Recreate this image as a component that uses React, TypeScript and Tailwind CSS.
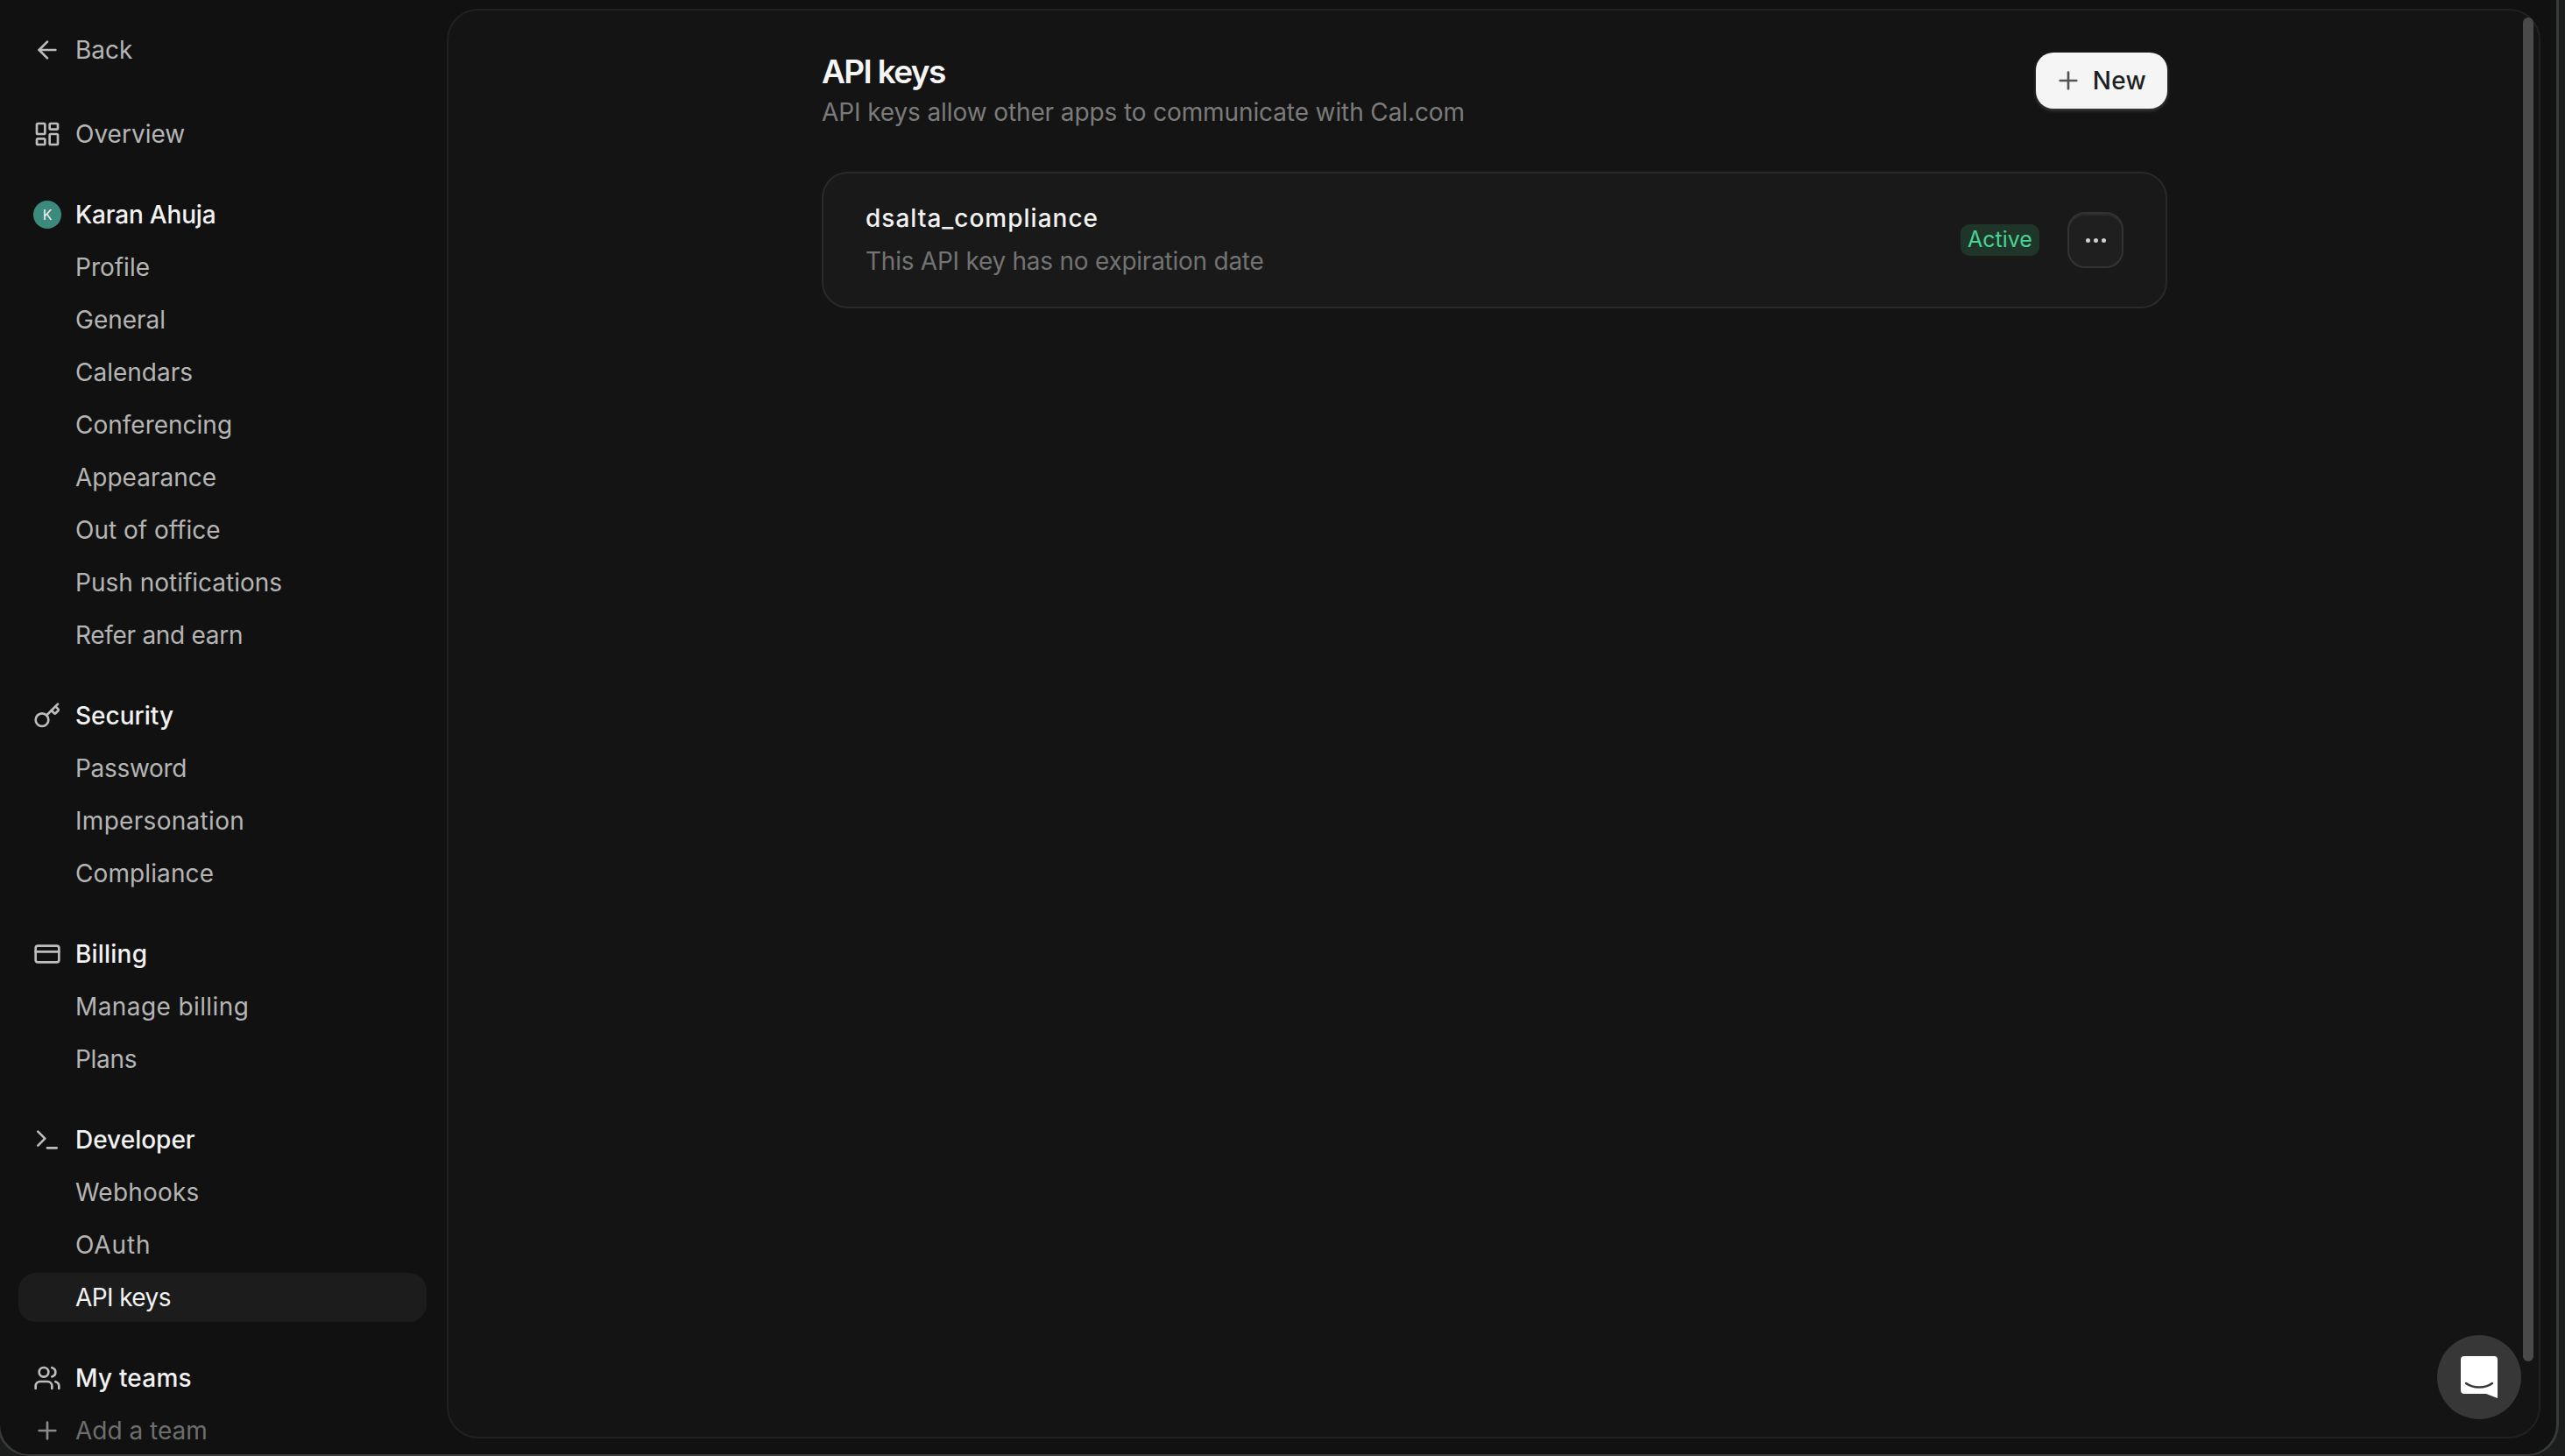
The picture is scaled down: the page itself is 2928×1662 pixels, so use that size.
import React from "react";
import { ArrowLeft, LayoutDashboard, Key, CreditCard, Terminal, Users, Plus } from "lucide-react";

const font = { fontFamily: "Inter, 'Liberation Sans', sans-serif" };

function Row({ icon, label, tone = "sub", active = false, track = "" }: { icon?: React.ReactNode; label: string; tone?: "top" | "head" | "sub" | "dim"; active?: boolean; track?: string }) {
  const color = active
    ? "text-[#f2f2f2]"
    : tone === "head"
      ? "text-[#f2f2f2]"
      : tone === "dim"
        ? "text-[#6e6e6e]"
        : "text-[#b5b5b5]";
  return (
    <div className={`flex h-[56px] w-[466px] shrink-0 items-center gap-[16px] rounded-[20px] pl-[17px] text-[28px] ${color} ${active ? "bg-[#1c1c1c]" : ""}`}>
      <span className="flex h-[32px] w-[32px] shrink-0 items-center justify-center">{icon}</span>
      <span className={`whitespace-nowrap ${track} ${tone === "head" ? "font-medium" : "font-normal"}`}>{label}</span>
    </div>
  );
}

const iconCls = "h-[32px] w-[32px] text-[#bdbdbd]";

function Section({ children }: { children: React.ReactNode }) {
  return <div className="flex flex-col gap-[4px]">{children}</div>;
}

export default function App() {
  return (
    <div className="h-[1662px] w-[2928px] overflow-hidden bg-[#1c1e1e]" style={font}>
      <div className="-ml-[3px] flex h-[1662px] w-[2924px] rounded-b-[36px] border-x-[3px] border-b-[2px] border-[#3a3a3a] bg-[#111111]">
        <aside className="flex w-[510px] shrink-0 flex-col overflow-hidden pt-[29px] pl-[21px]">
          <Row tone="sub" label="Back" icon={<ArrowLeft className={iconCls} strokeWidth={2} />} />
          <div className="mt-[40px]">
            <Row tone="sub" label="Overview" icon={<LayoutDashboard className={iconCls} strokeWidth={2} />} />
          </div>
          <div className="mt-[36px] flex flex-col gap-[36px]">
            <Section>
              <Row
                tone="head"
                label="Karan Ahuja"
                track="tracking-[-0.2px]"
                icon={
                  <span className="flex h-[32px] w-[32px] items-center justify-center rounded-full bg-[#3b8a7d] text-[16px] text-[#f2f2f2]">K</span>
                }
              />
              <Row label="Profile" />
              <Row label="General" />
              <Row label="Calendars" />
              <Row label="Conferencing" />
              <Row label="Appearance" />
              <Row label="Out of office" />
              <Row label="Push notifications" />
              <Row label="Refer and earn" track="tracking-[-0.3px]" />
            </Section>
            <Section>
              <Row tone="head" label="Security" icon={<Key className={iconCls} strokeWidth={2} />} />
              <Row label="Password" track="tracking-[-0.3px]" />
              <Row label="Impersonation" track="tracking-[0.3px]" />
              <Row label="Compliance" track="tracking-[0.1px]" />
            </Section>
            <Section>
              <Row tone="head" label="Billing" track="tracking-[0.2px]" icon={<CreditCard className={iconCls} strokeWidth={2} />} />
              <Row label="Manage billing" track="tracking-[0.4px]" />
              <Row label="Plans" track="tracking-[-0.3px]" />
            </Section>
            <Section>
              <Row tone="head" label="Developer" icon={<Terminal className={iconCls} strokeWidth={2} />} />
              <Row label="Webhooks" track="tracking-[0.2px]" />
              <Row label="OAuth" track="tracking-[0.9px]" />
              <Row label="API keys" track="tracking-[-0.6px]" active />
            </Section>
            <Section>
              <Row tone="head" label="My teams" track="tracking-[0.2px]" icon={<Users className={iconCls} strokeWidth={2} />} />
              <Row tone="dim" label="Add a team" icon={<Plus className="h-[32px] w-[32px] text-[#8a8a8a]" strokeWidth={2} />} />
            </Section>
          </div>
        </aside>

        <main className="relative mt-[10px] mr-[18px] mb-[18px] flex-1 rounded-[36px] border-[2px] border-[#212121] bg-[#141414] pl-[2px]">
          <div className="mx-auto w-[1536px] pt-[48px]">
            <header className="flex items-start justify-between">
              <div className="flex flex-col">
                <h1 className="h-[44px] text-[37px] leading-[44px] font-semibold tracking-[-0.045em] text-[#f5f5f5]">API keys</h1>
                <p className="mt-[4px] text-[28px] leading-[40px] tracking-[-0.11px] text-[#7b7b7b]">API keys allow other apps to communicate with Cal.com</p>
              </div>
              <button className="flex h-[64px] w-[150px] items-center justify-center gap-[12px] rounded-[20px] bg-[#f5f5f5] pr-[3px] text-[28px] font-medium tracking-[0.3px] text-[#1f1f1f] shadow-[0_2px_4px_rgba(255,255,255,0.2)]">
                <Plus className="h-[32px] w-[32px] text-[#555555]" strokeWidth={2} />
                New
              </button>
            </header>
            <section className="mt-[48px] flex h-[156px] items-center justify-between rounded-[30px] border-[2px] border-[#2a2a2a] bg-[#191919] pr-[48px] pl-[48px]">
              <div className="flex flex-col">
                <span className="text-[28px] leading-[46px] font-medium tracking-[1px] text-[#f2f2f2]">dsalta_compliance</span>
                <span className="mt-[2px] text-[28px] leading-[48px] tracking-[-0.25px] text-[#737373]">This API key has no expiration date</span>
              </div>
              <div className="flex items-center gap-[32px]">
                <span className="flex h-[36px] w-[90px] items-center justify-center rounded-[10px] bg-[#203529] text-[25px] text-[#4ad295]">Active</span>
                <button className="flex h-[64px] w-[64px] items-center justify-center gap-[4px] rounded-[20px] border-[2px] border-[#333333] bg-[#1f1f1f] shadow-[inset_0_2px_0_#2b2b2b]">
                  <span className="h-[5px] w-[5px] rounded-full bg-[#cfcfcf]" />
                  <span className="h-[5px] w-[5px] rounded-full bg-[#cfcfcf]" />
                  <span className="h-[5px] w-[5px] rounded-full bg-[#cfcfcf]" />
                </button>
              </div>
            </section>
          </div>

          <div className="absolute top-[8px] right-[6px] h-[1534px] w-[12px] rounded-full bg-[#4a4a4a]" />

          <div className="absolute right-[20px] bottom-[20px] flex h-[96px] w-[96px] items-center justify-center rounded-full bg-[#373737]">
            <svg width="42" height="48" viewBox="0 0 42 48" fill="none">
              <path d="M4 0H38a4 4 0 0 1 4 4V48L29 43H4a4 4 0 0 1-4-4V4a4 4 0 0 1 4-4Z" fill="#ffffff" />
              <path d="M6 31C14 37 28 37 36 31" stroke="#373737" strokeWidth="2.4" strokeLinecap="round" />
            </svg>
          </div>
        </main>
      </div>
    </div>
  );
}
